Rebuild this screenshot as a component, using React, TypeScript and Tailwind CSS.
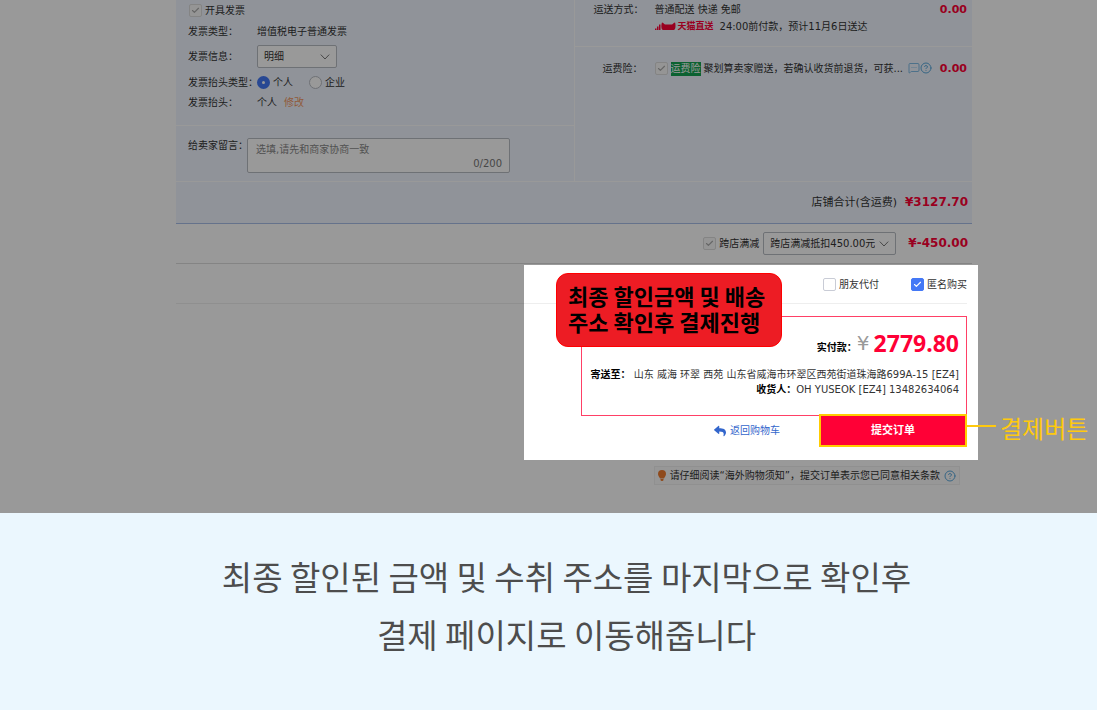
import { ReactNode } from 'react';
import { Check, CircleHelp, MessageSquareMore } from 'lucide-react';
import { FaReply } from 'react-icons/fa';

interface TickProps {
  id: string;
  label: ReactNode;
  checked?: boolean;
  muted?: boolean;
}

function Tick({ id, label, checked = false, muted = false }: TickProps) {
  return (
    <div className="flex items-center gap-[3px]">
      <span className="relative flex size-[13px]">
        <input
          id={id}
          type="checkbox"
          defaultChecked={checked}
          disabled={muted}
          className="peer size-[13px] appearance-none rounded-[2px] border border-[#c9ccd6] bg-white checked:border-[#4478f6] checked:bg-[#4478f6] disabled:border-[#dcdcdc] disabled:bg-[#f8f8f8]"
        />
        <Check
          strokeWidth={3}
          className="pointer-events-none absolute left-0.5 top-0.5 hidden size-[9px] text-white peer-checked:block peer-disabled:text-[#aaa]"
        />
      </span>
      <label htmlFor={id}>{label}</label>
    </div>
  );
}

interface PickerProps {
  label: string;
  options: string[];
  className: string;
}

function Picker({ label, options, className }: PickerProps) {
  return (
    <div className={`relative ${className}`}>
      <select
        aria-label={label}
        className="block h-[23px] w-full appearance-none rounded-[2px] border border-[#b8bcc4] bg-white pl-1.5 pr-5"
      >
        {options.map((option) => (
          <option key={option}>{option}</option>
        ))}
      </select>
      <svg
        viewBox="0 0 10 6"
        className="pointer-events-none absolute right-[7px] top-[9px] h-1.5 w-2.5"
        fill="none"
        stroke="#777"
        aria-hidden="true"
      >
        <path d="M.8.6 5 5 9.200.6" />
      </svg>
    </div>
  );
}

function Field({ label, className, children }: { label: string; className: string; children: ReactNode }) {
  return (
    <div className={`flex items-center ${className}`}>
      <span className="w-[69px] shrink-0 whitespace-nowrap">{label}</span>
      {children}
    </div>
  );
}

function PayerRadio({ id, label, checked = false }: { id: string; label: string; checked?: boolean }) {
  return (
    <div className="flex items-center gap-[3px]">
      <input
        id={id}
        name="payer"
        type="radio"
        defaultChecked={checked}
        className="size-[13px] appearance-none rounded-full border border-[#b8bcc4] bg-white checked:border-[5px] checked:border-[#4478f6]"
      />
      <label htmlFor={id}>{label}</label>
    </div>
  );
}

function Amount({ children, large = false }: { children: ReactNode; large?: boolean }) {
  return (
    <strong className={`font-bold text-[#ff0036] ${large ? 'text-[12px]' : 'text-[11px]'}`}>
      {children}
    </strong>
  );
}

function InvoiceForm() {
  return (
    <div className="flex-1 border-r border-white">
      <div className="h-[126px] border-b border-white pl-3">
        <div className="flex h-5 items-center pl-px">
          <Tick id="invoice" label="开具发票" checked muted />
        </div>
        <Field label="发票类型：" className="h-[22px]">
          增值税电子普通发票
        </Field>
        <Field label="发票信息：" className="h-7">
          <Picker label="发票信息" options={['明细']} className="w-20" />
        </Field>
        <Field label="发票抬头类型：" className="h-6">
          <div className="flex gap-4">
            <PayerRadio id="personal" label="个人" checked />
            <PayerRadio id="company" label="企业" />
          </div>
        </Field>
        <Field label="发票抬头：" className="h-4">
          个人
          <a href="#title" className="ml-[7px] text-[#f0965f]">
            修改
          </a>
        </Field>
      </div>
      <div className="flex pb-2 pl-3 pt-3">
        <label htmlFor="message" className="w-[59px] shrink-0 whitespace-nowrap">
          给卖家留言：
        </label>
        <div className="relative w-[263px]">
          <textarea
            id="message"
            placeholder="选填,请先和商家协商一致"
            className="block h-[35px] w-full resize-none rounded-[2px] border border-[#b8bcc4] bg-white px-2 py-[3px] placeholder:text-[#888]"
          />
          <span className="absolute bottom-0.5 right-2 text-[#777]">0/200</span>
        </div>
      </div>
    </div>
  );
}

function TmallLogo() {
  return (
    <svg viewBox="0 0 21 9" className="h-[9px] w-[21px]" fill="#ff0036" aria-hidden="true">
      <path d="M0 8h1.5V6.5H0zM2 8h1.5V4.5H2zM4 8h1.5V2.5H4z" />
      <path d="M7 .5c1 .2 2 1.200 3 2h7c1-.8 2-1.800 3-2 .5 1 .7 4 .3 5.500-.3 1.500-1 2-2 2H8.500c-1 0-1.700-.5-2-2-.3-2 0-4.500.5-5.500z" />
    </svg>
  );
}

function DeliveryInfo() {
  return (
    <div className="flex-1">
      <div className="flex h-[47px] border-b border-white pr-[5px] pt-0.5">
        <span className="w-[66px] whitespace-nowrap pl-[19px]">运送方式：</span>
        <div className="flex-1 pl-3.5">
          <div className="h-4">普通配送 快递 免邮</div>
          <div className="flex h-4 items-center">
            <TmallLogo />
            <b className="ml-0.5 text-[9px] text-[#ff0036]">天猫直送</b>
            <span className="ml-1.5">24:00前付款，预计11月6日送达</span>
          </div>
        </div>
        <Amount>0.00</Amount>
      </div>
      <div className="flex h-[42px] items-center pr-[5px]">
        <span className="w-[66px] whitespace-nowrap pl-7">运费险：</span>
        <div className="flex flex-1 items-center whitespace-nowrap pl-3.5">
          <Tick
            id="insurance"
            checked
            muted
            label={
              <>
                <span className="mr-[3px] inline-block bg-[#14a352] leading-[14px] text-white">运费险</span>
                聚划算卖家赠送，若确认收货前退货，可获...
              </>
            }
          />
        </div>
        <MessageSquareMore strokeWidth={1.5} className="size-3 text-[#5ba9dd]" />
        <CircleHelp strokeWidth={2} className="mr-2 size-3 text-[#5ba9dd]" />
        <Amount>0.00</Amount>
      </div>
    </div>
  );
}

function PaymentSummary() {
  return (
    <section className="relative z-10 -mr-1.5 mt-px w-[454px] bg-white pb-[13px] pr-[11px] shadow-[0_0_0_100vmax_rgba(0,0,0,0.4)]">
      <div className="flex h-[39px] items-center justify-end gap-8 border-b border-[#eee]">
        <Tick id="friend" label="朋友代付" />
        <Tick id="anonymous" label="匿名购买" checked />
      </div>

      <div className="ml-[57px] mt-3 h-[100px] border border-[#ff4066] pr-[7px] pt-2 text-right">
        <div className="flex h-9 items-center justify-end">
          <b className="mt-2 text-black">实付款：</b>
          <span className="mr-1 text-xl text-[#999]">¥</span>
          <strong className="font-['Noto_Sans'] text-[23px] text-[#ff0036]">2779.80</strong>
        </div>
        <p className="mt-1.5 whitespace-nowrap">
          <b className="text-black">寄送至：</b> 山东 威海 环翠 西苑 山东省威海市环翠区西苑街道珠海路699A-15 [EZ4]
        </p>
        <p>
          <b className="text-black">收货人：</b>OH YUSEOK [EZ4] 13482634064
        </p>
      </div>

      <div className="relative -mt-0.5 flex items-center justify-end">
        <a href="#cart" className="mr-[39px] flex items-center gap-1 text-[#3366cc]">
          <FaReply className="size-3" />
          返回购物车
        </a>
        <button
          type="button"
          className="h-[33px] w-[148px] border-2 border-[#ffcc00] bg-[#ff0036] text-[11px] font-bold text-white"
        >
          提交订单
        </button>
        <div className="absolute left-full top-0 flex gap-1 text-[#ffc90e]">
          <span className="mt-[11px] h-0.5 w-[29px] bg-[#ffc90e]" />
          <span className="whitespace-nowrap font-['Noto_Sans_CJK_KR',sans-serif] text-2xl leading-7">
            결제버튼
          </span>
        </div>
      </div>

      <div className="absolute left-8 top-2 h-[74px] w-[226px] whitespace-nowrap rounded-xl border border-[#ff0000] bg-[#ed1c24] pl-[11px] pt-2 font-['Noto_Sans_CJK_KR',sans-serif] text-[22px] font-bold leading-[26px] text-black">
        <p>최종 할인금액 및 배송</p>
        <p>주소 확인후 결제진행</p>
      </div>
    </section>
  );
}

export default function App() {
  return (
    <div className="flex min-h-screen flex-col bg-[#ebf7fe]">
      <main className="overflow-hidden bg-white pb-7 pl-44 pr-[125px] font-['DejaVu_Sans','Noto_Sans_CJK_SC',sans-serif] text-[10px] leading-[15px] text-[#333]">
        <div className="border-b border-[#a9bfe8] bg-[#f0f6ff]">
          <div className="flex border-b border-white">
            <InvoiceForm />
            <DeliveryInfo />
          </div>
          <div className="flex h-[41px] items-center justify-end gap-2 pr-1">
            <span className="text-[11px]">店铺合计(含运费)</span>
            <Amount large>¥3127.70</Amount>
          </div>
        </div>

        <div className="flex h-10 items-center justify-end border-b border-[#ddd] pr-1">
          <Tick id="cross-store" label="跨店满减" checked muted />
          <Picker label="跨店满减" options={['跨店满减抵扣450.00元']} className="ml-1 mr-3 w-[133px]" />
          <Amount large>¥-450.00</Amount>
        </div>

        <div className="flex">
          <div className="mt-px h-[39px] flex-1 border-b border-[#eee]" />
          <PaymentSummary />
        </div>

        <div className="mr-3 mt-1.5 flex justify-end">
          <div className="flex h-[19px] items-center border border-[#f0f0f0] bg-[#fcfcfc] px-[3px]">
            <svg viewBox="0 0 8 11" className="mr-1 h-[11px] w-2" fill="#ee7c30" aria-hidden="true">
              <path d="M4 0a4 4 0 0 1 4 4c0 2-1.500 3-2 4.500H2C1.500 7 0 6 0 4a4 4 0 0 1 4-4zM2.500 9h3v1.200L4.500 11h-1l-1-.8z" />
            </svg>
            请仔细阅读“海外购物须知”，提交订单表示您已同意相关条款
            <CircleHelp className="ml-1 size-3 text-[#5ba9dd]" />
          </div>
        </div>
      </main>

      <div className="flex-1 pb-10 pl-[60px] pr-6 pt-[34px] text-center font-['Noto_Sans_CJK_KR',sans-serif] text-[33px] leading-[58px] text-[#4d4d4d]">
        <p>최종 할인된 금액 및 수취 주소를 마지막으로 확인후</p>
        <p>결제 페이지로 이동해줍니다</p>
      </div>
    </div>
  );
}
